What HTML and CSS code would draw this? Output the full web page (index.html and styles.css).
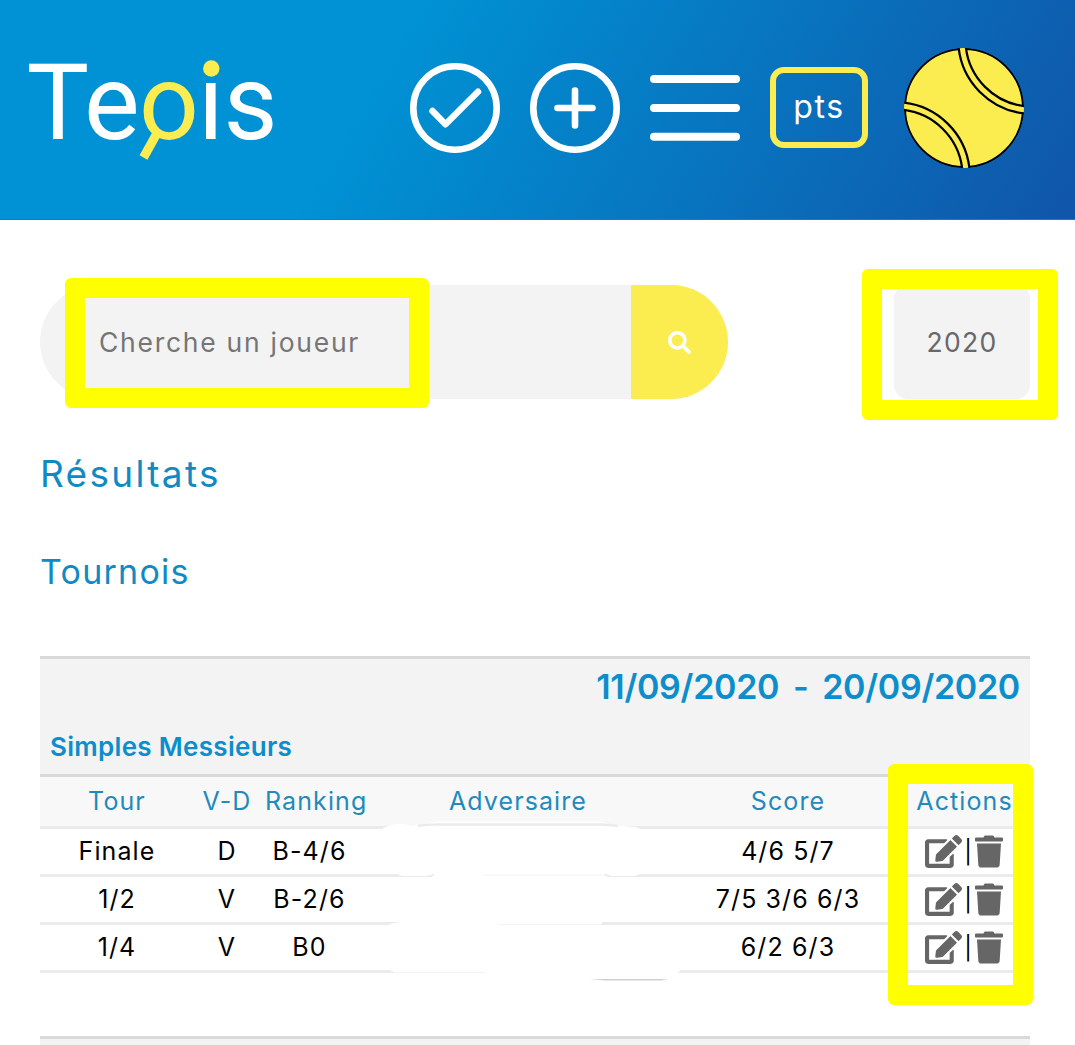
FILE: index.html
```html
<!DOCTYPE html>
<html lang="fr">
<head>
<meta charset="utf-8">
<title>Tennis - Résultats</title>
<link rel="stylesheet" href="styles.css">
</head>
<body>
<svg class="sprites" aria-hidden="true">
  <symbol id="edit" viewBox="0 0 576 512"><path d="M402.6 83.2l90.2 90.2c3.8 3.8 3.8 10 0 13.8L274.4 405.6l-92.8 10.3c-12.4 1.4-22.9-9.1-21.5-21.5l10.3-92.8L388.8 83.2c3.8-3.8 10-3.8 13.8 0zm162-22.9l-48.8-48.8c-15.2-15.2-39.9-15.2-55.2 0l-35.4 35.4c-3.8 3.8-3.8 10 0 13.8l90.2 90.2c3.8 3.8 10 3.8 13.8 0l35.4-35.4c15.2-15.3 15.2-40 0-55.2zM384 346.2V448H64V128h229.8c3.2 0 6.2-1.3 8.5-3.5l40-40c7.6-7.6 2.2-20.5-8.5-20.5H48C21.5 64 0 85.5 0 112v352c0 26.5 21.5 48 48 48h352c26.5 0 48-21.5 48-48V306.2c0-10.7-12.9-16-20.5-8.5l-40 40c-2.2 2.3-3.5 5.3-3.5 8.5z"/></symbol>
  <symbol id="trash" viewBox="0 0 448 512"><path d="M432 32H312l-9.4-18.7A24 24 0 0 0 281.1 0H166.8a23.72 23.72 0 0 0-21.4 13.3L136 32H16A16 16 0 0 0 0 48v32a16 16 0 0 0 16 16h416a16 16 0 0 0 16-16V48a16 16 0 0 0-16-16zM53.2 467a48 48 0 0 0 47.9 45h245.8a48 48 0 0 0 47.9-45L416 128H32z"/></symbol>
</svg>

<header class="topbar">
  <svg class="logo" width="260" height="120" viewBox="0 0 260 120" role="img">
    <g class="logo-text">
      <text x="-1.500" y="90.5">T</text>
      <text x="56" y="90.5">e</text>
      <text class="logo-accent" x="111" y="90.5">o</text>
      <text x="170" y="90.5">i</text>
      <text x="195.500" y="90.5">s</text>
    </g>
    <circle cx="183.300" cy="20.5" r="8.2" fill="#fbec50"/>
    <path d="M128 87L115.500 109.500" stroke="#fbec50" stroke-width="9"/>
  </svg>
  <nav class="tools">
    <svg width="90" height="90" viewBox="0 0 90 90" class="line-icon"><circle cx="45" cy="45" r="41.700"/><path d="M22.500 48L35.500 61.300L68 28.700" stroke-width="6.500"/></svg>
    <svg width="90" height="90" viewBox="0 0 90 90" class="line-icon"><circle cx="45" cy="45" r="41.700"/><path d="M27.500 45H62.500M45 27.500V62.500"/></svg>
    <svg width="90" height="66" viewBox="0 0 90 66" class="line-icon"><path d="M4 4H86M4 33H86M4 61.700H86" stroke-width="8"/></svg>
    <span class="pts">pts</span>
    <svg class="ball" width="120" height="120" viewBox="0 0 120 120">
      <clipPath id="round"><circle cx="60" cy="60" r="60"/></clipPath>
      <g clip-path="url(#round)" fill="none">
        <circle cx="60" cy="60" r="59" fill="#fbec50" stroke="#000" stroke-width="2"/>
        <g stroke="#000" stroke-width="9.500"><path d="M58 -3A71 71 0 0 0 122 62"/><path d="M-3 58A71 71 0 0 1 62 122"/></g>
        <g stroke="#fbec50" stroke-width="5"><path d="M58 -3A71 71 0 0 0 122 62"/><path d="M-3 58A71 71 0 0 1 62 122"/></g>
      </g>
    </svg>
  </nav>
</header>

<main>
  <div class="filters">
    <div class="search">
      <span class="placeholder">Cherche un joueur</span>
      <span class="go"><svg width="23" height="23" viewBox="0 0 512 512"><path fill="#fff" d="M505 442.700L405.300 343c-4.500-4.500-10.600-7-17-7H372c27.600-35.300 44-79.700 44-128C416 93.100 322.900 0 208 0S0 93.100 0 208s93.100 208 208 208c48.300 0 92.700-16.400 128-44v16.300c0 6.400 2.500 12.500 7 17l99.700 99.700c9.400 9.400 24.600 9.400 33.900 0l28.300-28.300c9.400-9.400 9.400-24.600.1-34zM208 336c-70.700 0-128-57.200-128-128 0-70.700 57.200-128 128-128 70.700 0 128 57.200 128 128 0 70.700-57.200 128-128 128z"/></svg></span>
    </div>
    <div class="year">2020</div>
  </div>

  <h1>Résultats</h1>
  <h2>Tournois</h2>

  <section class="tournament">
    <div class="caption">
      <div class="dates">11/09/2020 - 20/09/2020</div>
      <div class="event">Simples Messieurs</div>
    </div>
    <div class="row head"><span>Tour</span><span>V-D</span><span class="rank">Ranking</span><span>Adversaire</span><span>Score</span><span>Actions</span></div>
    <div class="row"><span>Finale</span><span>D</span><span>B-4/6</span><span></span><span>4/6 5/7</span><span class="actions"><svg class="edit"><use href="#edit"/></svg><i>|</i><svg class="trash"><use href="#trash"/></svg></span></div>
    <div class="row"><span>1/2</span><span>V</span><span>B-2/6</span><span></span><span>7/5 3/6 6/3</span><span class="actions"><svg class="edit"><use href="#edit"/></svg><i>|</i><svg class="trash"><use href="#trash"/></svg></span></div>
    <div class="row"><span>1/4</span><span>V</span><span>B0</span><span></span><span>6/2 6/3</span><span class="actions"><svg class="edit"><use href="#edit"/></svg><i>|</i><svg class="trash"><use href="#trash"/></svg></span></div>
  </section>
  <section class="tournament next"></section>
</main>

<!-- Brushed-out opponent names -->
<svg class="eraser" width="350" height="170" viewBox="370 820 350 170">
  <path fill="#fff" d="M382 829Q388 825 398 824Q406 824 412 826L436 821.500H600L617 825.500L635 827L642 829.500V878H370V829.500Z" clip-path="url(#e1)"/>
  <clipPath id="e1"><path d="M382 820H642V830H382Z"/></clipPath>
  <path d="M418 826Q425 824.500 436 824.500H600Q612 824.700 618 826" fill="none" stroke="#ebebeb" stroke-width="2.600"/>
  <path fill="#fff" d="M396 873.500L402 876H425Q431 875 435 873.500H604L612 876H634L642 873.500V873H396ZM430 878L436 873H600L610 878Z"/>
  <path fill="#fff" d="M385 926Q393 922.500 402 921.500H602V923.500L598 926Z"/>
  <path fill="#fff" d="M388 969.500L394 972H480L490 974H677L681 969.500Z"/>
  <path d="M590 979H668L661 980.500H605Z" fill="#cfcfcf"/>
  <path d="M483 875H602M498 924.400H600M394 972.500H485" stroke="#f4f4f4" fill="none"/>
</svg>

<div class="mark mark-search"></div>
<div class="mark mark-year"></div>
<div class="mark mark-actions"></div>
</body>
</html>
```
FILE: styles.css
```css
* { box-sizing: border-box; }

body {
  margin: 0;
  position: relative;
  height: 1045px;
  overflow: hidden;
  background: #fff;
  color: #000;
  font-family: Inter, "Liberation Sans", sans-serif;
}

svg { display: block; flex: none; }
.sprites { display: none; }

.topbar {
  display: flex;
  align-items: center;
  height: 220px;
  padding: 0 51px 4px 28px;
  background: linear-gradient(120deg, #0092d4 35%, #1055a9 100%);
  border-bottom: 1px solid #1180bb;
}
.logo { overflow: visible; }
.logo-text { font-family: Roboto, sans-serif; font-size: 105px; fill: #fff; }
.logo-text .logo-accent { fill: #fbec50; }

.tools {
  display: flex;
  align-items: center;
  gap: 30px;
  margin-left: auto;
}
.line-icon {
  fill: none;
  stroke: #fff;
  stroke-width: 6.6px;
  stroke-linecap: round;
  stroke-linejoin: round;
}
.pts {
  display: flex;
  align-items: center;
  justify-content: center;
  width: 98px;
  height: 81px;
  padding-bottom: 3px;
  border: 6px solid #fbec50;
  border-radius: 14px;
  color: #fff;
  font-size: 32px;
  letter-spacing: 1.7px;
}
.ball { margin-left: 6px; }

main { padding: 65px 45px 0 40px; }

.filters {
  display: flex;
  justify-content: space-between;
  height: 114px;
}
.search {
  display: flex;
  width: 688px;
  border-radius: 57px;
  overflow: hidden;
  background: #f3f3f3;
}
.placeholder {
  flex: 1;
  padding-left: 59px;
  line-height: 115px;
  color: #757575;
  font-size: 26.5px;
  letter-spacing: 1.73px;
}
.go {
  display: flex;
  align-items: center;
  justify-content: center;
  width: 97px;
  background: #fbec50;
}
.year {
  width: 136px;
  border-radius: 14px;
  background: #f3f3f3;
  color: #686868;
  font-size: 26.5px;
  letter-spacing: 1.3px;
  line-height: 114px;
  text-align: center;
}

h1, h2 { margin: 0; color: #0f8ac4; font-weight: 400; }
h1 { padding-top: 50px; font-size: 37px; line-height: 50px; letter-spacing: 2.3px; }
h2 { padding-top: 48px; font-size: 34px; line-height: 50px; letter-spacing: 1.25px; }

.tournament {
  margin-top: 59px;
  border-top: 3px solid #d9d9d9;
}
.caption {
  height: 118px;
  padding: 4px 10px 0;
  background: #f3f3f3;
  border-bottom: 3px solid #d9d9d9;
  color: #0b8ecb;
  font-weight: 600;
}
.dates {
  font-size: 34px;
  line-height: 48px;
  letter-spacing: -0.3px;
  word-spacing: 5.5px;
  text-align: right;
  white-space: nowrap;
}
.event { padding-top: 18px; font-size: 26px; line-height: 36px; letter-spacing: 0.3px; }

.row {
  display: grid;
  grid-template-columns: 154px 66px 99px 318px 222px 131px;
  align-items: center;
  height: 48px;
  padding-bottom: 2px;
  border-bottom: 3px solid #ebebeb;
  font-size: 25px;
  letter-spacing: 1.1px;
  text-align: center;
  white-space: nowrap;
}
.row.head { height: 52px; background: #f8f8f8; color: #1f8abb; }
.rank { padding-left: 5px; text-align: left; }

.actions {
  display: flex;
  align-items: center;
  justify-content: center;
  padding: 2px 2px 0 0;
  fill: #666;
}
.actions i { width: 13px; font-style: normal; font-size: 23px; letter-spacing: 0; }
.edit { width: 37px; height: 33px; }
.trash { width: 28px; height: 33px; }

.next { height: 9px; margin-top: 63px; background: #f3f3f3; }

.eraser { position: absolute; left: 370px; top: 820px; }

/* Highlight frames laid over the page */
.mark {
  position: absolute;
  border: 20px solid #ff0;
  border-radius: 6px;
}
.mark-search { left: 65px; top: 278px; width: 364px; height: 130px; }
.mark-year { left: 862px; top: 269px; width: 196px; height: 151px; }
.mark-actions { left: 888px; top: 764px; width: 145px; height: 241px; }
```
